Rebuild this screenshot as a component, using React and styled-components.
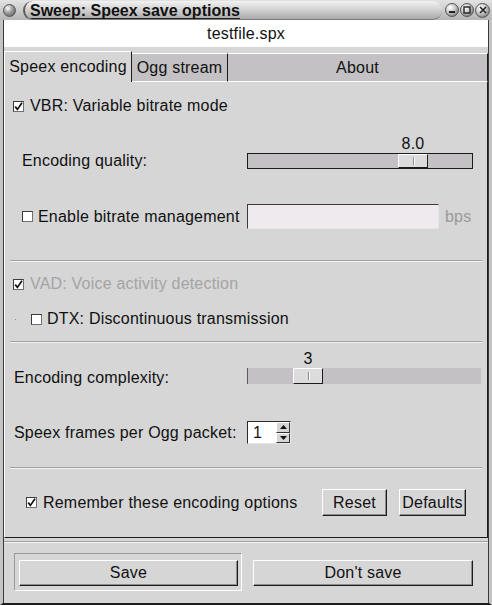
import React from 'react';
import styled, { createGlobalStyle } from 'styled-components';

const colors = {
	face: '#d6d6d6',
	tab: '#c3c1c3',
	trough: '#c3c1c3',
	field: '#eeeaee',
	dark: '#1c1c1c',
	shadow: '#8e8e8e',
	light: '#ffffff',
	disabled: '#a4a4a4',
	frame: '#c4c4c4',
	text: '#111111',
};

const GlobalStyle = createGlobalStyle`
	* {
		box-sizing: border-box;
	}

	body {
		margin: 0;
		background: ${colors.face};
		font-family: "Liberation Sans", Arial, sans-serif;
		font-size: 16px;
		letter-spacing: 0.2px;
		color: ${colors.text};
	}
`;

const Window = styled.div`
	width: 492px;
	height: 605px;
	display: flex;
	flex-direction: column;
	background: ${colors.face};
	overflow: hidden;
`;

const TitleBar = styled.div`
	height: 20px;
	flex-shrink: 0;
	display: flex;
	align-items: center;
	padding: 0 2px 0 3px;
	background: linear-gradient(#e2e2e2, #b6b6b6);
`;

const Orb = styled.span`
	width: ${props => props.$size}px;
	height: ${props => props.$size}px;
	flex-shrink: 0;
	display: inline-flex;
	align-items: center;
	justify-content: center;
	border-radius: 50%;
	border: 1px solid #555;
	background: radial-gradient(circle at 35% 30%, #ffffff 0, ${props => (props.$dim ? '#9a9a9a' : '#c6c6c6')} 45%, #5a5a5a 100%);
`;

const TitlePill = styled.div`
	flex: 1;
	height: 19px;
	margin: 1px 3px 0 7px;
	display: flex;
	align-items: flex-end;
	padding-left: 5px;
	overflow: hidden;
	border-radius: 10px;
	border-left: 2px solid #5a5a5a;
	border-bottom: 1px solid #7a7a7a;
	background: linear-gradient(#f2f2f2, #cdcdcd 55%, #a9a9a9);
`;

const TitleText = styled.span`
	font-weight: bold;
	font-size: 16px;
	line-height: 14px;
	letter-spacing: 0;
	color: #111;
	border-bottom: 1px solid #222;
	white-space: nowrap;
`;

const Controls = styled.div`
	display: flex;
	gap: 1px;
`;

const Frame = styled.div`
	flex: 1;
	display: flex;
	flex-direction: column;
	padding: 0 1px;
	border-left: 3px solid ${colors.frame};
	border-right: 3px solid ${colors.frame};
	border-bottom: 2px solid ${colors.dark};
	box-shadow: inset 1px 0 #3a3a3a, inset -1px 0 #3a3a3a;
`;

const FileBar = styled.div`
	height: 27px;
	line-height: 27px;
	text-align: center;
	background: ${colors.light};
`;

const TabRow = styled.div`
	height: 31px;
	margin-top: 4px;
	display: flex;
	align-items: flex-end;
`;

const Tab = styled.div`
	width: ${props => (props.$width ? `${props.$width}px` : 'auto')};
	flex: ${props => (props.$width ? 'none' : 1)};
	height: ${props => (props.$active ? 31 : 29)}px;
	display: flex;
	align-items: center;
	justify-content: center;
	padding-top: ${props => (props.$active ? 0 : 1)}px;
	background: ${props => (props.$active ? colors.face : colors.tab)};
	border-top: 1px solid ${colors.light};
	border-left: ${props => (props.$active ? `1px solid ${colors.light}` : 'none')};
	border-right: 1px solid ${colors.dark};
	border-bottom: ${props => (props.$active ? 'none' : `1px solid ${colors.light}`)};
	white-space: nowrap;
`;

const Panel = styled.div`
	height: 456px;
	display: flex;
	flex-direction: column;
	border-left: 1px solid ${colors.light};
	border-right: 1px solid ${colors.dark};
	border-bottom: 1px solid ${colors.dark};
`;

const Line = styled.div`
	height: ${props => props.$h}px;
	margin-top: ${props => props.$top}px;
	padding-left: ${props => props.$indent}px;
	display: flex;
	align-items: center;
	gap: ${props => props.$gap || 6}px;
	color: ${props => (props.$disabled ? colors.disabled : colors.text)};
	white-space: nowrap;
`;

const FieldRow = styled.div`
	height: ${props => props.$h}px;
	margin-top: ${props => props.$top}px;
	display: grid;
	grid-template-columns: 242px 1fr;
	align-items: ${props => props.$align || 'center'};
`;

const Label = styled.div`
	padding-left: ${props => props.$indent}px;
	padding-top: ${props => props.$drop || 0}px;
	line-height: 18px;
	display: flex;
	align-items: center;
	gap: 5px;
	white-space: nowrap;
`;

const Separator = styled.div`
	height: 2px;
	margin: ${props => props.$top}px ${props => props.$inset}px 0;
	border-top: 1px solid #a0a0a0;
	border-bottom: 1px solid #f2f2f2;
`;

const Box = styled.span`
	width: 11px;
	height: 11px;
	flex-shrink: 0;
	display: inline-flex;
	align-items: center;
	justify-content: center;
	background: ${colors.light};
	border: 1px solid #3c3c3c;
	border-right-color: #707070;
	border-bottom-color: #707070;
`;

const Dot = styled.span`
	width: 1px;
	height: 1px;
	margin-right: 10px;
	background: #8a8a8a;
`;

const SliderBox = styled.div`
	display: flex;
	flex-direction: column;
`;

const Value = styled.div`
	width: 30px;
	height: 18px;
	line-height: 18px;
	text-align: center;
`;

const Trough = styled.div`
	position: relative;
	width: ${props => props.$width}px;
	height: 16px;
	background: ${colors.trough};
	border: ${props => (props.$framed ? `1px solid ${colors.dark}` : 'none')};
	border-left: 1px solid ${props => (props.$framed ? colors.dark : '#5a5a5a')};
`;

const Thumb = styled.div`
	position: absolute;
	top: 0;
	width: 30px;
	height: ${props => (props.$framed ? 14 : 16)}px;
	display: flex;
	align-items: center;
	justify-content: center;
	background: #dcdcdc;
	border: 1px solid;
	border-color: ${colors.light} ${colors.dark} ${colors.dark} ${colors.light};

	&::after {
		content: '';
		width: 1px;
		height: 8px;
		background: #8a8a8a;
		box-shadow: 1px 0 ${colors.light};
	}
`;

const Field = styled.div`
	width: 192px;
	height: 25px;
	background: ${colors.field};
	border: 1px solid;
	border-color: #3a3a3a #e6e6e6 #e6e6e6 #3a3a3a;
`;

const Unit = styled.span`
	margin-left: 6px;
	color: #9a9a9a;
`;

const FieldWrap = styled.div`
	display: flex;
	align-items: center;
`;

const Spin = styled.div`
	width: 44px;
	height: 23px;
	display: flex;
	background: ${colors.light};
	border: 1px solid;
	border-color: #2a2a2a #e6e6e6 #e6e6e6 #2a2a2a;
`;

const SpinText = styled.span`
	flex: 1;
	padding-left: 5px;
	line-height: 21px;
`;

const SpinArrows = styled.div`
	width: 14px;
	display: flex;
	flex-direction: column;
`;

const SpinButton = styled.div`
	flex: 1;
	display: flex;
	align-items: center;
	justify-content: center;
	background: ${colors.face};
	border: 1px solid;
	border-color: ${colors.light} #333 #333 ${colors.light};
`;

const ButtonGroup = styled.div`
	margin-left: auto;
	padding-right: 21px;
	display: flex;
	gap: 12px;
`;

const Button = styled.div`
	width: ${props => props.$width}px;
	height: ${props => props.$height || 27}px;
	margin-top: ${props => props.$top || 0}px;
	display: flex;
	align-items: center;
	justify-content: center;
	background: ${colors.face};
	border: 1px solid;
	border-color: ${colors.light} ${colors.dark} ${colors.dark} ${colors.light};
	box-shadow: inset -1px -1px ${colors.shadow};
	white-space: nowrap;
`;

const Footer = styled.div`
	margin-top: 10px;
	padding-left: 10px;
	display: flex;
	align-items: flex-start;
	gap: 11px;
`;

const DefaultFrame = styled.div`
	width: 228px;
	height: 38px;
	padding: 6px 3px 4px 4px;
	border: 1px solid;
	border-color: #9a9a9a ${colors.light} ${colors.light} #9a9a9a;
`;

function Check({ checked }) {
	return (
		<Box>
			{checked && (
				<svg width="9" height="9" viewBox="0 0 9 9">
					<path d="M1.2 4.6 L3.4 7.4 L8 0.8" fill="none" stroke="#111" strokeWidth="1.7" />
				</svg>
			)}
		</Box>
	);
}

function Slider({ value, pos, width, framed }) {
	const travel = width - (framed ? 2 : 1) - 30;
	const offset = Math.round(pos * travel);

	return (
		<SliderBox>
			<Value style={{ marginLeft: offset + 1 }}>{value}</Value>
			<Trough $width={width} $framed={framed}>
				<Thumb $framed={framed} style={{ left: offset }} />
			</Trough>
		</SliderBox>
	);
}

function WindowControls() {
	return (
		<Controls>
			<Orb $size={14}>
				<svg width="8" height="8" viewBox="0 0 8 8">
					<rect x="1" y="5" width="6" height="2" fill="#222" />
				</svg>
			</Orb>
			<Orb $size={14}>
				<svg width="8" height="8" viewBox="0 0 8 8">
					<rect x="1" y="1" width="6" height="6" fill="none" stroke="#222" strokeWidth="1.4" />
				</svg>
			</Orb>
			<Orb $size={15}>
				<svg width="8" height="8" viewBox="0 0 8 8">
					<path d="M1 1 L7 7 M7 1 L1 7" stroke="#222" strokeWidth="1.6" />
				</svg>
			</Orb>
		</Controls>
	);
}

export default function App() {
	return (
		<Window>
			<GlobalStyle />
			<TitleBar>
				<Orb $size={13} $dim />
				<TitlePill>
					<TitleText>Sweep: Speex save options</TitleText>
				</TitlePill>
				<WindowControls />
			</TitleBar>

			<Frame>
				<FileBar>testfile.spx</FileBar>

				<TabRow>
					<Tab $active $width={128}>Speex encoding</Tab>
					<Tab $width={96}>Ogg stream</Tab>
					<Tab>About</Tab>
				</TabRow>

				<Panel>
					<Line $top={12} $h={24} $indent={8}>
						<Check checked />
						VBR: Variable bitrate mode
					</Line>

					<FieldRow $top={17} $h={34} $align="start">
						<Label $indent={17} $drop={17}>Encoding quality:</Label>
						<Slider value="8.0" pos={0.773} width={226} framed />
					</FieldRow>

					<FieldRow $top={35} $h={25}>
						<Label $indent={17}>
							<Check />
							Enable bitrate management
						</Label>
						<FieldWrap>
							<Field />
							<Unit>bps</Unit>
						</FieldWrap>
					</FieldRow>

					<Separator $top={31} $inset={5} />

					<Line $top={10} $h={24} $indent={8} $disabled>
						<Check checked />
						VAD: Voice activity detection
					</Line>

					<Line $top={11} $h={24} $indent={10} $gap={5}>
						<Dot />
						<Check />
						DTX: Discontinuous transmission
					</Line>

					<Separator $top={10} $inset={5} />

					<FieldRow $top={7} $h={34} $align="start">
						<Label $indent={9} $drop={19}>Encoding complexity:</Label>
						<Slider value="3" pos={0.22} width={234} />
					</FieldRow>

					<FieldRow $top={37} $h={23}>
						<Label $indent={9}>Speex frames per Ogg packet:</Label>
						<Spin>
							<SpinText>1</SpinText>
							<SpinArrows>
								<SpinButton>
									<svg width="7" height="4" viewBox="0 0 7 4">
										<polygon points="0,4 7,4 3.5,0" fill="#111" />
									</svg>
								</SpinButton>
								<SpinButton>
									<svg width="7" height="4" viewBox="0 0 7 4">
										<polygon points="0,0 7,0 3.5,4" fill="#111" />
									</svg>
								</SpinButton>
							</SpinArrows>
						</Spin>
					</FieldRow>

					<Separator $top={23} $inset={5} />

					<Line $top={20} $h={27} $indent={21}>
						<Check checked />
						Remember these encoding options
						<ButtonGroup>
							<Button $width={65}>Reset</Button>
							<Button $width={67}>Defaults</Button>
						</ButtonGroup>
					</Line>
				</Panel>

				<Separator $top={3} $inset={0} />

				<Footer>
					<DefaultFrame>
						<Button $width={219} $height={26}>Save</Button>
					</DefaultFrame>
					<Button $width={220} $height={26} $top={7}>Don't save</Button>
				</Footer>
			</Frame>
		</Window>
	);
}
